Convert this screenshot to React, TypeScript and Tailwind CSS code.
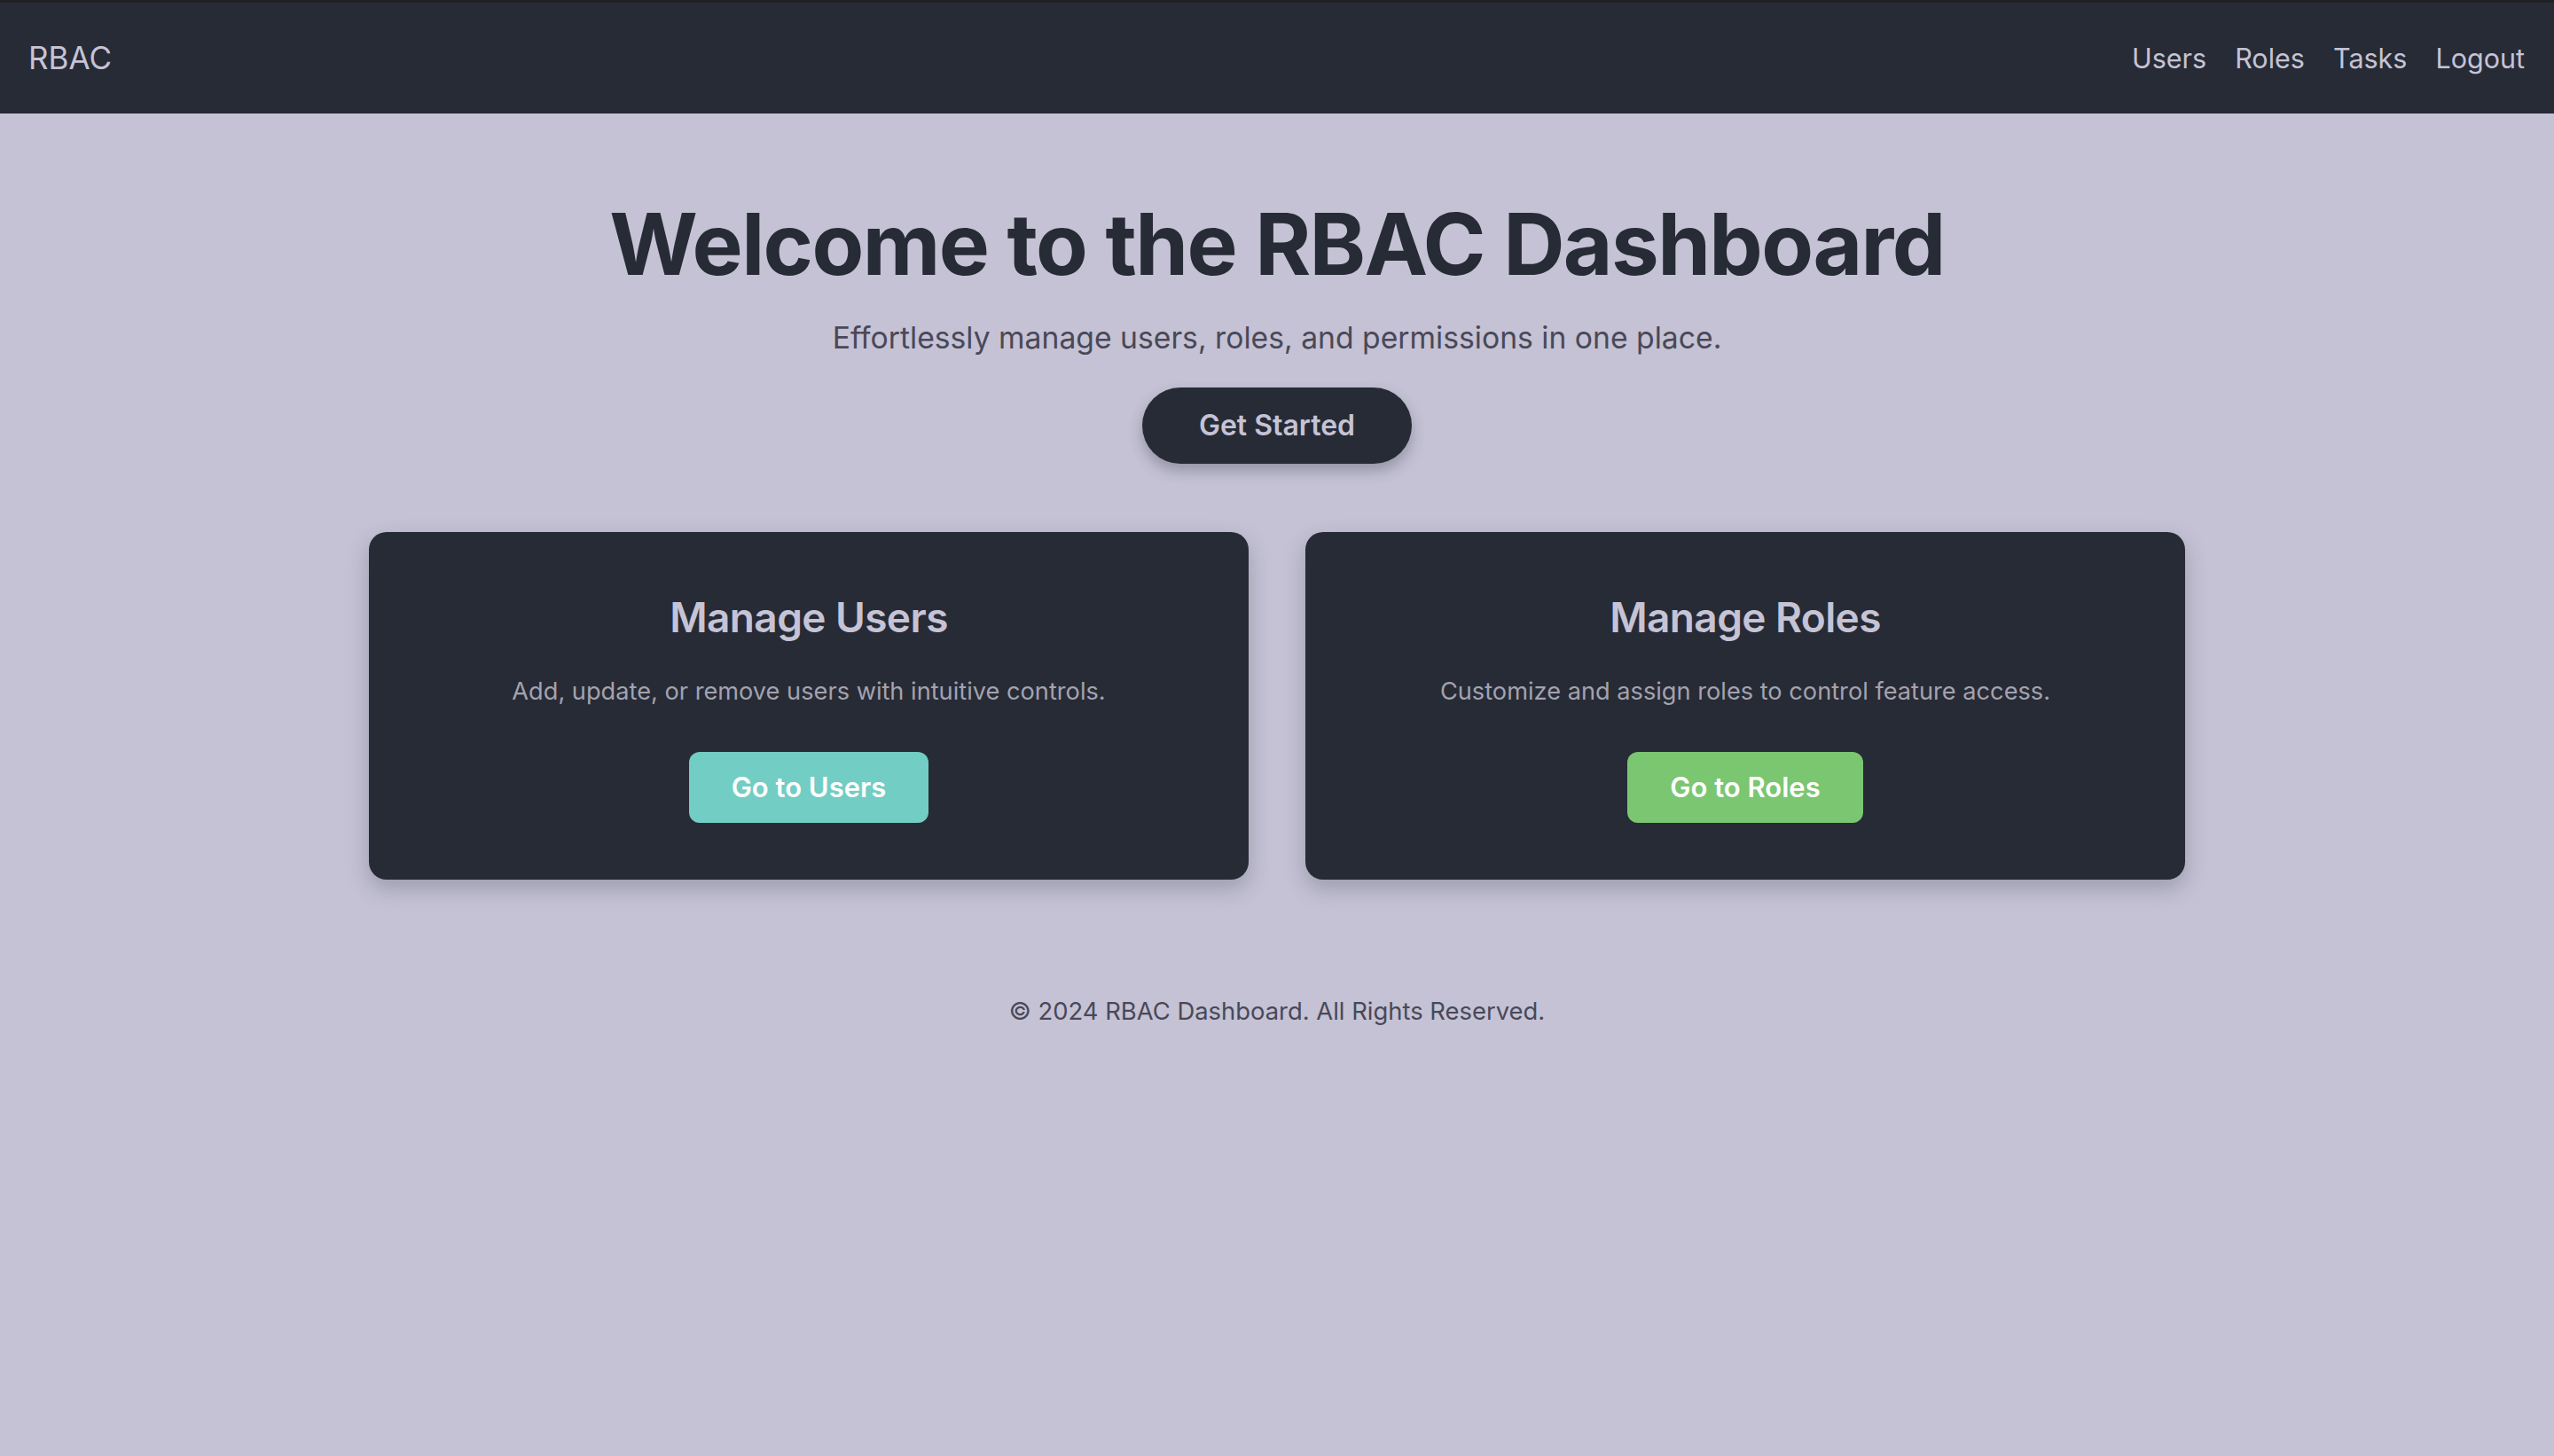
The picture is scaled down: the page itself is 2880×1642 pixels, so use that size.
import React from 'react';

const font = { fontFamily: 'Inter, "Noto Sans", sans-serif' };

interface FeatureCardProps {
  title: string;
  description: string;
  action: string;
  buttonClass: string;
}

const FeatureCard: React.FC<FeatureCardProps> = ({ title, description, action, buttonClass }) => {
  return (
    <div className="bg-[#272b35] rounded-[20px] shadow-[0_10px_24px_rgba(40,40,60,0.25)] p-[64px] flex flex-col items-center text-center">
      <h2 className="text-[46px] leading-[64px] font-semibold text-[#c5c3d5] tracking-[-0.6px]">{title}</h2>
      <p className="mt-[32px] text-[27.2px] leading-[40px] text-[#a3a2b0]">{description}</p>
      <button
        className={`mt-[48px] ${buttonClass} text-white text-[31px] leading-[48px] font-semibold px-[48px] py-[16px] rounded-[12px]`}
      >
        {action}
      </button>
    </div>
  );
};

export default function App() {
  return (
    <div className="min-h-screen bg-[#c4c2d4]" style={font}>
      {/* Navbar */}
      <nav className="h-[128px] bg-[#272b35] border-t-[3px] border-[#1f2024] flex items-center justify-between pl-[32px] pr-[33px]">
        <span className="text-[35px] text-[#c5c3d5]">RBAC</span>
        <div className="flex items-center gap-[32px] text-[30.5px] text-[#c5c3d5]">
          <a href="#">Users</a>
          <a href="#">Roles</a>
          <a href="#">Tasks</a>
          <a href="#">Logout</a>
        </div>
      </nav>

      {/* Hero */}
      <section className="flex flex-col items-center text-center pt-[99px]">
        <h1 className="text-[96px] leading-none font-bold text-[#272b35] tracking-[-1.6px]">
          Welcome to the RBAC Dashboard
        </h1>
        <p className="mt-[30px] text-[33.7px] leading-[56px] text-[#4a4858]">
          Effortlessly manage users, roles, and permissions in one place.
        </p>
        <button className="mt-[28px] h-[86px] px-[64px] rounded-full bg-[#272b35] text-[#c5c3d5] text-[32px] font-semibold shadow-[0_8px_16px_rgba(40,40,60,0.3)]">
          Get Started
        </button>
      </section>

      {/* Cards */}
      <section className="mt-[77px] max-w-[2048px] mx-auto grid grid-cols-2 gap-[64px]">
        <FeatureCard
          title="Manage Users"
          description="Add, update, or remove users with intuitive controls."
          action="Go to Users"
          buttonClass="bg-[#72cdc4]"
        />
        <FeatureCard
          title="Manage Roles"
          description="Customize and assign roles to control feature access."
          action="Go to Roles"
          buttonClass="bg-[#7bc671]"
        />
      </section>

      {/* Footer */}
      <footer className="mt-[126px] text-center text-[27.4px] leading-[45px] text-[#4a4858]">
        © 2024 RBAC Dashboard. All Rights Reserved.
      </footer>
    </div>
  );
}
